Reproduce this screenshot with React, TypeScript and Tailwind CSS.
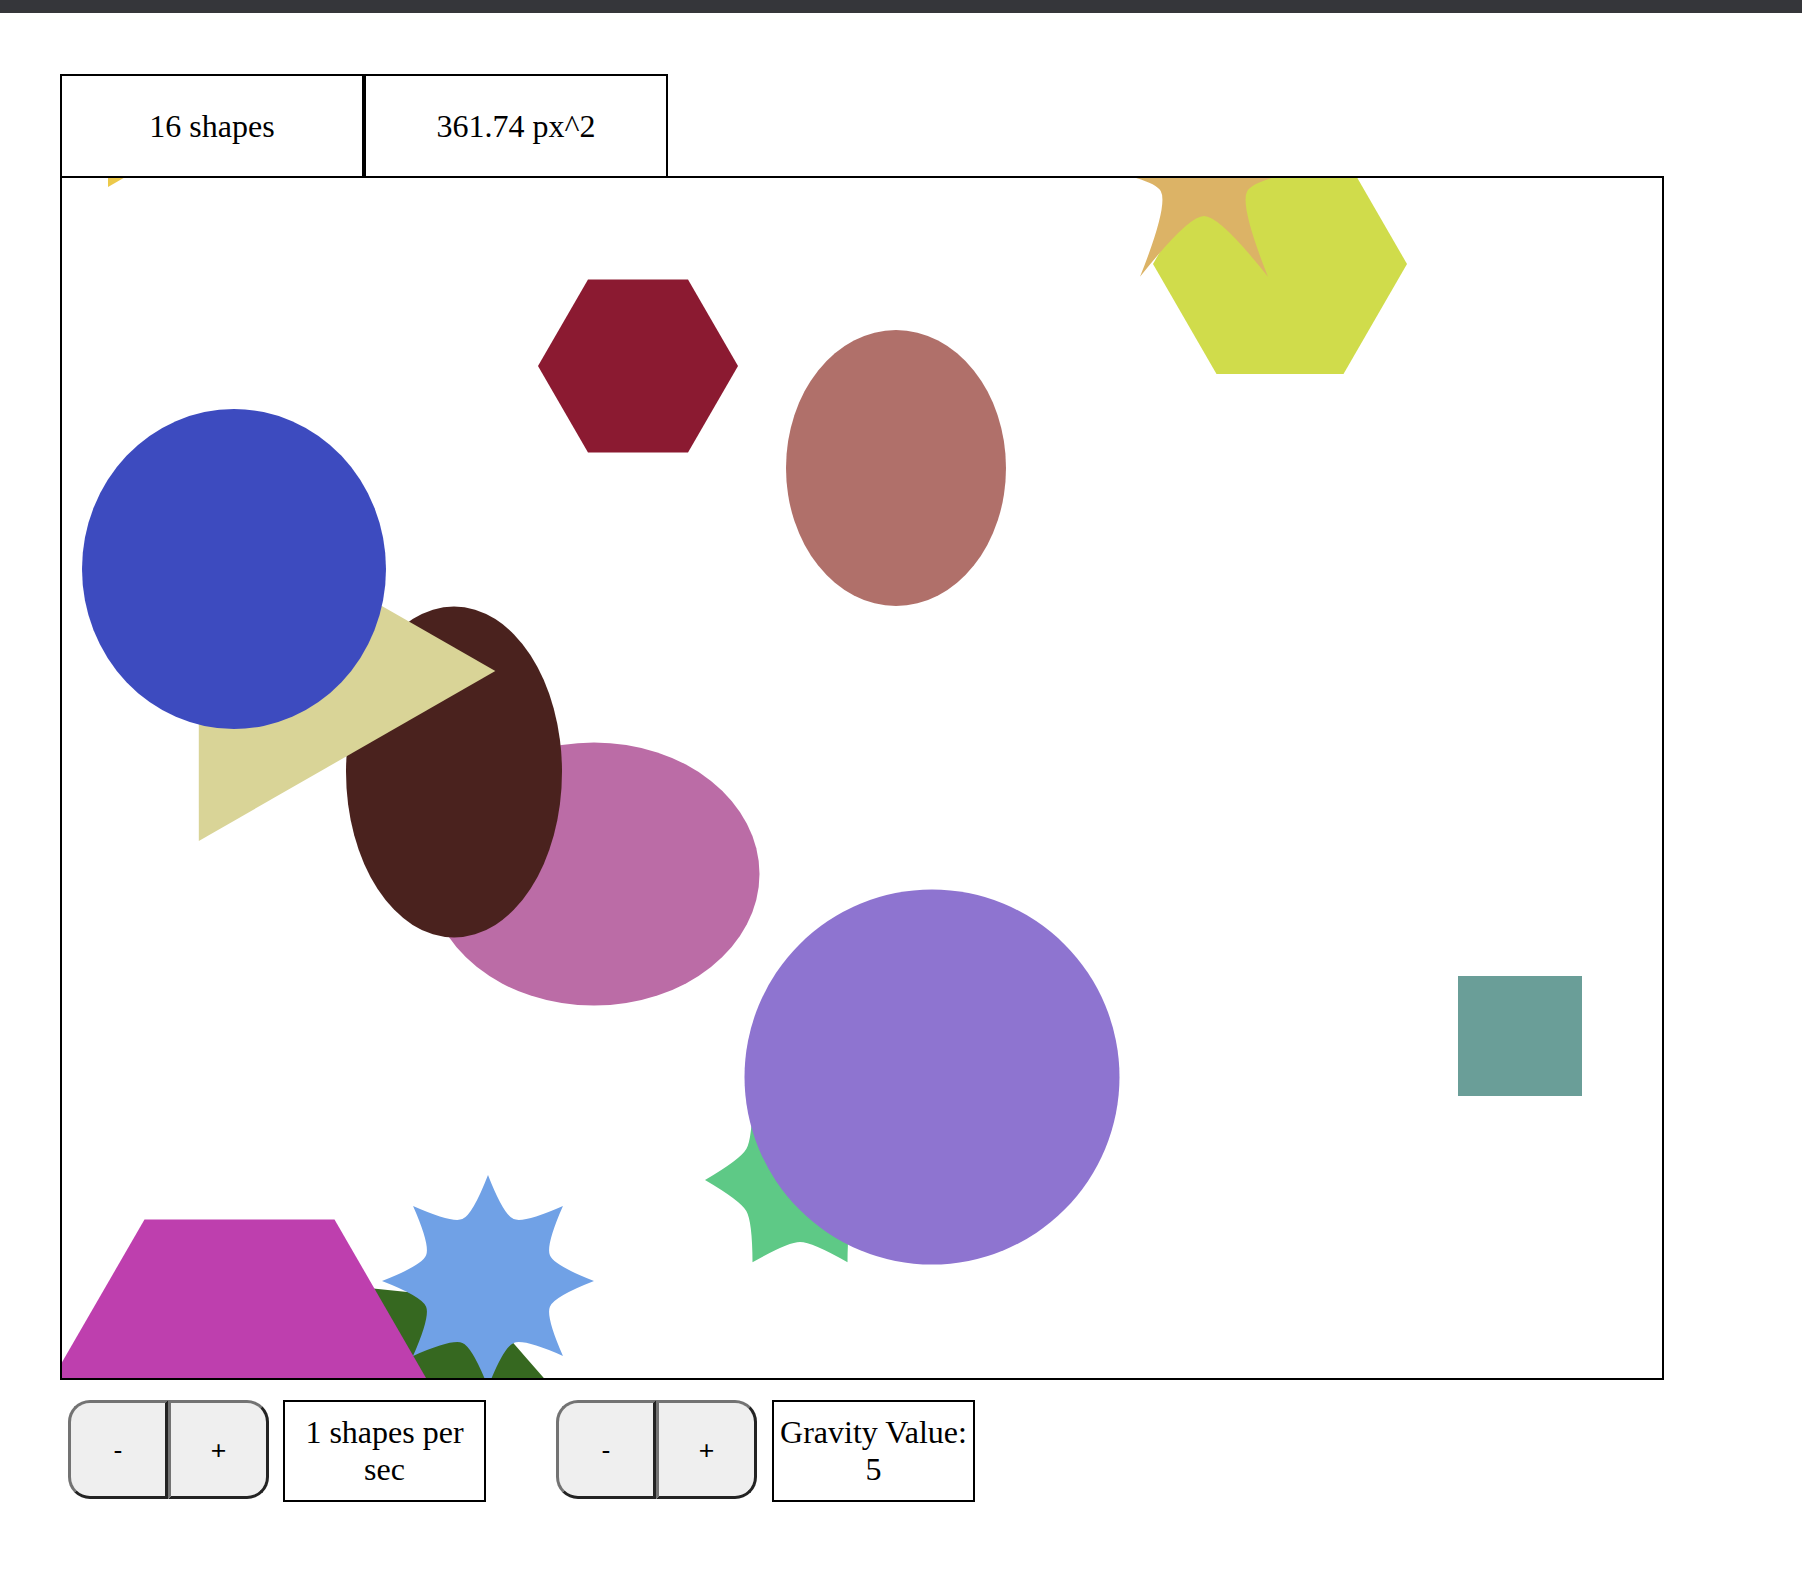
import React from "react";

function starPath(cx: number, cy: number, n: number, R: number, rv: number, s: number, rotDeg: number) {
  const rot = (rotDeg * Math.PI) / 180;
  const step = (2 * Math.PI) / n;
  const f = (x: number, y: number) => `${x.toFixed(2)} ${y.toFixed(2)}`;
  const tip = (i: number) => {
    const a = rot + i * step;
    return [cx + R * Math.cos(a), cy + R * Math.sin(a)];
  };
  const [x0, y0] = tip(0);
  let d = `M ${f(x0, y0)}`;
  for (let i = 0; i < n; i++) {
    const a = rot + (i + 0.5) * step;
    const vx = cx + rv * Math.cos(a);
    const vy = cy + rv * Math.sin(a);
    const tx = -Math.sin(a);
    const ty = Math.cos(a);
    const [x1, y1] = tip(i + 1);
    d += ` Q ${f(vx - s * tx, vy - s * ty)} ${f(vx, vy)}`;
    d += ` Q ${f(vx + s * tx, vy + s * ty)} ${f(x1, y1)}`;
  }
  return d + " Z";
}

function hexPoints(cx: number, cy: number, r: number) {
  const pts: string[] = [];
  for (let i = 0; i < 6; i++) {
    const a = (i * Math.PI) / 3;
    pts.push(`${(cx + r * Math.cos(a)).toFixed(2)},${(cy + r * Math.sin(a)).toFixed(2)}`);
  }
  return pts.join(" ");
}

function ShapesCanvas() {
  return (
    <svg width={1600} height={1200} viewBox="62 178 1600 1200" className="block">
      <polygon points="108,187 108,127 160,157" fill="#ecc94a" />
      <ellipse cx={594} cy={874} rx={165.5} ry={131.6} fill="#bb6ca6" />
      <ellipse cx={454} cy={772} rx={108} ry={165.5} fill="#4a221e" />
      <polygon points="198.8,501 198.8,841 495.3,671" fill="#d9d497" />
      <ellipse cx={234} cy={569} rx={152} ry={160} fill="#3d4bbf" />
      <polygon points={hexPoints(638, 366, 100)} fill="#8b1a31" />
      <ellipse cx={896} cy={468} rx={110} ry={138} fill="#b0706a" />
      <polygon points={hexPoints(1280, 264, 127)} fill="#d0dc4b" />
      <path d={starPath(1204, 166, 6, 128, 50, 16, 0)} fill="#dcb366" />
      <path d={starPath(800, 1180, 6, 95, 62, 12, 0)} fill="#5ec986" />
      <circle cx={932} cy={1077} r={187.5} fill="#8e74d0" />
      <path d="M 320 1283 L 475 1299 L 556 1392 L 320 1392 Z" fill="#366820" />
      <polygon points={hexPoints(239.5, 1384, 190)} fill="#be3fae" />
      <path d={starPath(488, 1281, 8, 106, 67, 11, 0)} fill="#70a1e6" />
      <rect x={1458} y={976} width={124} height={120} fill="#6a9e98" />
    </svg>
  );
}

function ButtonPair() {
  return (
    <div className="flex">
      <button className="w-[100px] h-[99px] bg-[#efefef] border-[3px] border-t-[#737373] border-l-[#737373] border-b-[#232323] border-r-[#232323] rounded-l-[22px] flex items-center justify-center text-[26.67px] text-black" style={{ fontFamily: '"Liberation Sans", Arial, sans-serif' }}>
        -
      </button>
      <button className="w-[101px] h-[99px] bg-[#efefef] border-[3px] border-t-[#737373] border-l-[#737373] border-b-[#232323] border-r-[#232323] rounded-r-[22px] flex items-center justify-center text-[26.67px] text-black" style={{ fontFamily: '"Liberation Sans", Arial, sans-serif' }}>
        +
      </button>
    </div>
  );
}

export default function App() {
  return (
    <div className="min-h-[1576px] bg-white text-black" style={{ fontFamily: '"Liberation Serif", "Times New Roman", serif' }}>
      <div className="h-[13px] bg-[#35363a]" />
      <div className="pl-[60px] pt-[61px]">
        <div className="flex">
          <div className="w-[304px] h-[102px] border-2 border-b-0 border-black flex items-center justify-center text-[32px]">16 shapes</div>
          <div className="w-[304px] h-[102px] border-2 border-b-0 border-black flex items-center justify-center text-[32px]">361.74 px^2</div>
        </div>
        <div className="w-[1604px] h-[1204px] border-2 border-black overflow-hidden">
          <ShapesCanvas />
        </div>
        <div className="flex items-start mt-[20px] ml-[8px]">
          <ButtonPair />
          <div className="ml-[14px] w-[203px] h-[102px] border-2 border-black flex items-center justify-center text-center text-[32px] leading-[1.15]">
            1 shapes per sec
          </div>
          <div className="ml-[70px]">
            <ButtonPair />
          </div>
          <div className="ml-[15px] w-[203px] h-[102px] border-2 border-black flex items-center justify-center text-center text-[32px] leading-[1.15]">
            Gravity Value: 5
          </div>
        </div>
      </div>
    </div>
  );
}
